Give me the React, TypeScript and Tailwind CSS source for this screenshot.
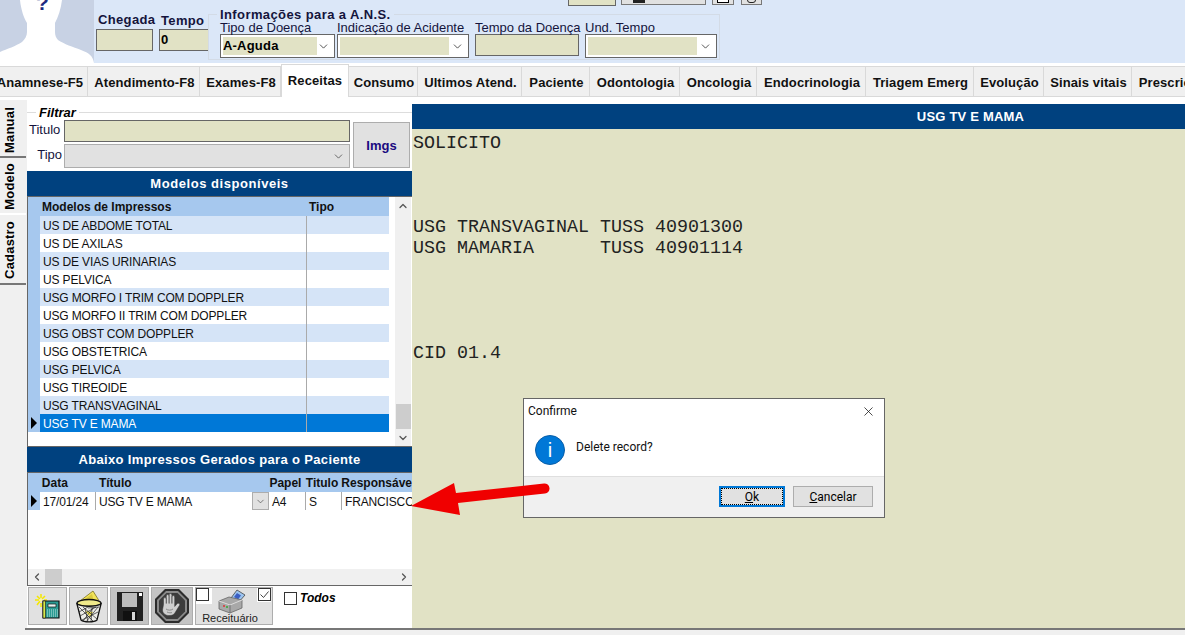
import { ChevronDown, ChevronLeft, ChevronRight, ChevronUp, X } from 'lucide-react';

const tabs = [
  { label: 'Anamnese-F5', w: 'w-[88px] pr-[7px]' },
  { label: 'Atendimento-F8', w: 'w-[112px] pl-[2px]' },
  { label: 'Exames-F8', w: 'w-[81px] pl-[2px]' },
  { label: 'Receitas', w: 'w-[68px]', active: true },
  { label: 'Consumo', w: 'w-[69px] pl-[2px]' },
  { label: 'Ultimos Atend.', w: 'w-[104px] pl-[2px]' },
  { label: 'Paciente', w: 'w-[68px] pl-[2px]' },
  { label: 'Odontologia', w: 'w-[90px] pl-[2px]' },
  { label: 'Oncologia', w: 'w-[77px] pl-[2px]' },
  { label: 'Endocrinologia', w: 'w-[109px] pl-[2px]' },
  { label: 'Triagem Emerg', w: 'w-[108px] pl-[2px]' },
  { label: 'Evolução', w: 'w-[70px] pl-[2px]' },
  { label: 'Sinais vitais', w: 'w-[88px] pl-[2px]' },
  { label: 'Prescrição', w: 'w-[80px] pl-[2px]' },
];

const modelos = [
  'US DE ABDOME TOTAL',
  'US DE AXILAS',
  'US DE VIAS URINARIAS',
  'US PELVICA',
  'USG MORFO I TRIM COM DOPPLER',
  'USG MORFO II TRIM COM DOPPLER',
  'USG OBST COM DOPPLER',
  'USG OBSTETRICA',
  'USG PELVICA',
  'USG TIREOIDE',
  'USG TRANSVAGINAL',
  'USG TV E MAMA',
];

const sideTabs = [
  { label: 'Manual', h: 'h-[55px]', dark: true },
  { label: 'Modelo', h: 'h-[55px]' },
  { label: 'Cadastro', h: 'h-[68px]', dark: true },
];

const laudo = `SOLICITO



USG TRANSVAGINAL TUSS 40901300
USG MAMARIA      TUSS 40901114




CID 01.4`;

function Combo({ value, w, fill }: { value?: string; w: string; fill: string }) {
  return (
    <div className={`${w} h-[24px] bg-white border border-[#666] flex items-center p-[2px]`}>
      <div className={`${fill} h-[18px] bg-[#e1e2c5] text-[13px] font-bold leading-[18px] tracking-[0.2px] text-black`}>{value}</div>
      <ChevronDown size={13} strokeWidth={1.4} className="ml-auto mr-[2px] text-[#222]" />
    </div>
  );
}

function RowMarker() {
  return <div className="w-0 h-0 border-y-[6px] border-y-transparent border-l-[6px] border-l-black ml-[3px]" />;
}

function NewIcon() {
  return (
    <svg width="26" height="26" viewBox="0 0 26 26">
      <path d="M6 1v4M6 10v4M0 7h4M9 7h3M2 3l3 3M10 3L7 6M2 12l3-4" stroke="#f5e800" strokeWidth="1.5" />
      <circle cx="6" cy="7" r="1.6" fill="#fff7a0" />
      <path d="M8 8h16v17H8z" fill="#2a9a92" stroke="#111" strokeWidth="1.2" />
      <path d="M8 8h2.500v17H8z" fill="#d7e84a" stroke="#111" strokeWidth="0.6" />
      <path d="M13 11h8v3h-8z" fill="#e8f5f3" stroke="#111" strokeWidth="0.7" />
      <path d="M12 17h11M12 19h11M12 21h11M12 23h11" stroke="#bfe3df" strokeWidth="1" strokeDasharray="1 1" />
    </svg>
  );
}

function TrashIcon() {
  return (
    <svg width="26" height="33" viewBox="0 0 26 33">
      <path d="M4 11L17 1l5 8 2 4-6 4H8z" fill="#f2e45a" stroke="#7a7020" strokeWidth="0.8" />
      <path d="M9 9l7-5 2 8z" fill="#d9c93e" />
      <ellipse cx="13" cy="13" rx="12" ry="3.500" fill="#efe98a" stroke="#111" strokeWidth="1.3" />
      <path d="M1 14l4 16c3 2.500 13 2.500 16 0l4-16c-5 3-19 3-24 0z" fill="#eeeeea" stroke="#111" strokeWidth="1.3" />
      <path d="M9 21l8 1-3 5z" fill="#f2e45a" />
      <path d="M3 17l14 14M7 17l14 12M12 18l11-1M17 18L7 31M22 17L10 32M3 22l9-5M4 26l16-9M6 30l16-8M9 18l3 14M16 18l-1 14" stroke="#222" strokeWidth="0.7" />
    </svg>
  );
}

function SaveIcon() {
  return (
    <svg width="28" height="31" viewBox="0 0 28 31">
      <path d="M1 1h26v29H1z" fill="#222" />
      <path d="M6 2h15v14H6z" fill="#bdbdbd" />
      <path d="M23 2h3v3h-3z" fill="#fff" />
      <path d="M7 20h14v10H7z" fill="#111" />
      <path d="M16 21h3v8h-3z" fill="#d8d8d8" />
    </svg>
  );
}

function StopIcon() {
  return (
    <svg width="34" height="34" viewBox="0 0 34 34">
      <path d="M10 0h14l10 10v14L24 34H10L0 24V10z" fill="#2c2c2c" />
      <path d="M11 2h12l9 9v12l-9 9H11l-9-9V11z" fill="#8a8a8a" />
      <path d="M11.500 4h11l7.500 7.500v11L22.500 30h-11L4 22.500v-11z" fill="#3c3c3c" />
      <path d="M8.500 15.500V10a1.400 1.400 0 012.800 0v4.500V7a1.400 1.400 0 012.800 0v7.500V6a1.400 1.400 0 012.800 0v8.500V8a1.400 1.400 0 012.800 0v9.500l2.600-3a1.500 1.500 0 012.300 1.800l-4.300 7c-1.200 2.200-3 3.200-5.300 3.200h-1.500c-3.300 0-6-2.500-6-5.500z" fill="#cfcfcf" stroke="#333" strokeWidth="0.5" />
      <path d="M11 20c2 1.500 5 1.500 7 0M12 23c2 1 4 1 5 .5" stroke="#777" strokeWidth="0.8" fill="none" />
    </svg>
  );
}

function PrinterIcon() {
  return (
    <svg width="28" height="25" viewBox="0 0 28 25">
      <path d="M13 9l6-8 8 5-7 8z" fill="#9cc4ef" stroke="#444" strokeWidth="0.8" />
      <path d="M16 8l3-4 4 2.500-3 4z" fill="#3b5fc4" />
      <path d="M1 12l10-4 13 3v8l-12 5-11-4z" fill="#a8a8a8" stroke="#666" strokeWidth="0.8" />
      <path d="M1 12l11 4 12-5" fill="none" stroke="#dcdcdc" strokeWidth="1" />
      <path d="M12 16v8" stroke="#666" strokeWidth="0.8" />
      <path d="M5 17h2" stroke="#d33" strokeWidth="1.500" />
      <path d="M8 18h2" stroke="#3a3" strokeWidth="1.500" />
    </svg>
  );
}

function TinyCheck({ checked }: { checked?: boolean }) {
  return (
    <div className="w-[13px] h-[13px] border border-[#333] bg-white flex items-center justify-center">
      {checked && (
        <svg width="11" height="11" viewBox="0 0 11 11">
          <path d="M1.500 5.500l3 3 5-6" fill="none" stroke="#444" strokeWidth="1" />
        </svg>
      )}
    </div>
  );
}

export default function App() {
  return (
    <div className="relative w-[1185px] h-[635px] overflow-hidden bg-white text-black font-['Liberation_Sans',Arial,sans-serif]">
      {/* Cabecalho */}
      <div className="h-[63px] bg-[#dbe7f8] flex relative">
        <div className="w-[94px] h-[63px] bg-[#c8d2e4] relative overflow-hidden">
          <svg width="94" height="63" viewBox="0 0 94 63" className="block">
            <path d="M20 0c1 10 4 18 7 23v9c0 4-2 7-5 10C16 46 7 49 0 52v11h94c-1-7-5-10-13-13-8-3-17-6-23-10-2-2-3-5-3-8v-9c3-6 6-14 7-23z" fill="#fff" />
          </svg>
          <span className="absolute left-[36px] top-[-9px] text-[21px] leading-[24px] font-bold text-[#1c2a80]">?</span>
        </div>

        <div className="ml-[2px] w-[57px] pt-[11px]">
          <div className="text-[13px] font-bold leading-[18px] tracking-[0.35px] text-[#14143c] whitespace-nowrap ml-[2px]">Chegada</div>
          <div className="h-[22px] bg-[#e1e2c5] border border-[#666]" />
        </div>
        <div className="ml-[6px] w-[50px] pt-[12px]">
          <div className="text-[13px] font-bold leading-[17px] tracking-[0.35px] text-[#14143c] ml-[2px]">Tempo</div>
          <div className="h-[22px] bg-[#e1e2c5] border border-[#666] text-[13px] font-bold leading-[20px] pl-[1px]">0</div>
        </div>

        <div className="relative -ml-[1px] mt-[14px] w-[512px] h-[46px] border border-[#d3dbe6] flex pl-[11px] pt-[6px]">
          <div className="absolute left-[8px] top-[-7px] bg-[#dbe7f8] px-[3px] text-[13px] font-bold leading-[14px] tracking-[0.4px] text-[#14143c] whitespace-nowrap">
            Informações para a A.N.S.
          </div>
          <div className="w-[117px]">
            <div className="text-[13px] leading-[13px] whitespace-nowrap text-[#14143c]">Tipo de Doença</div>
            <Combo value="A-Aguda" w="w-[115px]" fill="w-[94px]" />
          </div>
          <div className="w-[138px]">
            <div className="text-[13px] leading-[13px] whitespace-nowrap text-[#14143c]">Indicação de Acidente</div>
            <Combo w="w-[132px]" fill="w-[109px]" />
          </div>
          <div className="w-[110px]">
            <div className="text-[13px] leading-[13px] whitespace-nowrap text-[#14143c]">Tempo da Doença</div>
            <div className="w-[104px] h-[22px] bg-[#e1e2c5] border border-[#666]" />
          </div>
          <div className="w-[132px]">
            <div className="text-[13px] leading-[13px] whitespace-nowrap text-[#14143c]">Und. Tempo</div>
            <Combo w="w-[132px]" fill="w-[109px]" />
          </div>
        </div>

        {/* Resto da barra cortado no topo */}
        <div className="absolute left-[568px] top-[-4px] w-[48px] h-[10px] bg-[#e1e2c5] border border-[#666]" />
        <div className="absolute left-[621px] top-[-4px] w-[85px] h-[9px] bg-[#e1e1e1] border border-[#777] flex justify-start">
          <div className="ml-[11px] w-[12px] h-[6px] bg-[#222]" />
        </div>
        <div className="absolute left-[712px] top-[-4px] w-[22px] h-[9px] bg-[#e1e1e1] border border-[#777]">
          <div className="mx-auto w-[12px] h-[6px] border border-black bg-white" />
        </div>
        <div className="absolute left-[741px] top-[-4px] w-[21px] h-[9px] bg-[#e1e1e1] border border-[#777]">
          <div className="mx-auto w-[9px] h-[6px] rounded-full border border-[#222]" />
        </div>
      </div>

      {/* Abas */}
      <div className="h-[37px] pt-[3px]">
        <div className="flex w-full h-[31px] bg-[#f0f0f0] border-b border-t border-[#d9d9d9] overflow-visible">
          {tabs.map((tab) => (
            <div
              key={tab.label}
              className={`${tab.w} shrink-0 flex items-center justify-center whitespace-nowrap text-[13px] font-bold tracking-[0.1px] text-[#111] border-r border-[#d9d9d9] ${
                tab.active
                  ? 'bg-white h-[33px] -mt-[3px] pb-[1px] border-t border-l border-[#d9d9d9]'
                  : 'pt-[2px]'
              }`}
            >
              {tab.label}
            </div>
          ))}
        </div>
      </div>

      {/* Corpo */}
      <div className="flex h-[535px]">
        <div className="w-[27px] bg-[#f0f0f0] pt-[3px] shrink-0">
          {sideTabs.map((tab) => (
            <div
              key={tab.label}
              className={`${tab.h} w-[26px] mb-[2px] pr-[6px] flex items-center justify-center border-b-2 ${
                tab.dark ? 'border-b-[#777]' : 'border-b-white'
              }`}
            >
              <span className="[writing-mode:vertical-rl] rotate-180 text-[13px] font-bold tracking-[0.2px] whitespace-nowrap">{tab.label}</span>
            </div>
          ))}
        </div>

        <div className="w-[385px] shrink-0 flex flex-col pt-[4px]">
          {/* Filtro */}
          <div className="relative h-[67px] bg-white px-[2px]">
            <div className="absolute left-0 right-0 top-[8px] border-t border-[#ddd]" />
            <div className="absolute left-[9px] top-[1px] bg-white px-[3px] text-[13px] font-bold italic leading-[15px]">Filtrar</div>
            <div className="flex pt-[16px]">
              <div className="w-[35px] text-right text-[13px] leading-[16px] pt-[2px] text-[#14143c]">
                <div className="h-[25px] pr-[4px]">Titulo</div>
                <div className="h-[24px] pr-[2px]">Tipo</div>
              </div>
              <div className="w-[286px]">
                <div className="h-[22px] bg-[#e1e2c5] border border-[#666]" />
                <div className="mt-[2px] h-[24px] bg-[#e1e1e1] border border-[#adadad] flex items-center justify-end pr-[4px]">
                  <ChevronDown size={13} strokeWidth={1.4} className="text-[#444]" />
                </div>
              </div>
              <div className="ml-[3px] mt-[2px] w-[57px] h-[46px] pt-[2px] bg-[#e1e1e1] border border-[#adadad] flex items-center justify-center text-[13px] font-bold text-[#1a0a80]">
                Imgs
              </div>
            </div>
          </div>

          {/* Modelos */}
          <div className="h-[26px] bg-[#00417f] text-white text-center text-[13px] font-bold leading-[25px] tracking-[0.55px] border-b border-[#666]">
            Modelos disponíveis
          </div>
          <div className="h-[250px] flex bg-white border-b border-[#666] border-l border-l-[#666]">
            <div className="w-[361px]">
              <div className="h-[19px] bg-[#a6c8ee] flex text-[12px] font-bold leading-[20px] text-[#111]">
                <div className="w-[279px] pl-[14px]">Modelos de Impressos</div>
                <div className="pl-[2px]">Tipo</div>
              </div>
              {modelos.map((m, i) => {
                const selected = m === 'USG TV E MAMA';
                const bg = selected ? 'bg-[#0078d7] text-white' : i % 2 === 0 ? 'bg-[#d5e4f7] text-[#111]' : 'bg-white text-[#111]';
                return (
                  <div key={m} className="flex h-[18px] text-[12px] leading-[20px] tracking-[-0.15px]">
                    <div className="w-[12px] bg-[#a6c8ee] flex items-center shrink-0">{selected && <RowMarker />}</div>
                    <div className={`${bg} w-[267px] h-[18px] pl-[3px] border-r border-r-[#aaa] whitespace-nowrap`}>{m}</div>
                    <div className={`${bg} w-[82px]`} />
                  </div>
                );
              })}
            </div>
            <div className="ml-[6px] w-[16px] bg-[#f0f0f0] flex flex-col items-center text-[#555]">
              <ChevronUp size={12} strokeWidth={2.5} className="mt-[3px]" />
              <div className="mt-[192px] w-[15px] h-[25px] bg-[#cdcdcd]" />
              <ChevronDown size={12} strokeWidth={2.5} className="mt-[3px]" />
            </div>
          </div>

          {/* Impressos gerados */}
          <div className="h-[26px] bg-[#00417f] text-white text-center text-[13px] font-bold leading-[25px] tracking-[0.35px] border-b border-[#666]">
            Abaixo Impressos Gerados para o Paciente
          </div>
          <div className="h-[113px] bg-white border-b border-[#666] border-l border-l-[#666] flex flex-col overflow-hidden">
            <div className="h-[19px] bg-[#a6c8ee] flex text-[12px] font-bold leading-[20px] text-[#111] whitespace-nowrap">
              <div className="w-[14px]" />
              <div className="w-[58px]">Data</div>
              <div className="w-[173px]">Título</div>
              <div className="w-[37px]">Papel</div>
              <div className="w-[36px]">Titulo</div>
              <div>Responsáve</div>
            </div>
            <div className="flex h-[18px] text-[12px] leading-[20px] tracking-[-0.15px] text-[#111] whitespace-nowrap">
              <div className="w-[12px] bg-[#a6c8ee] flex items-center shrink-0"><RowMarker /></div>
              <div className="w-[56px] h-[18px] pl-[3px] border-r border-r-[#aaa] shrink-0">17/01/24</div>
              <div className="w-[156px] pl-[3px] shrink-0">USG TV E MAMA</div>
              <div className="w-[17px] h-[18px] bg-[#e1e1e1] border border-[#adadad] flex items-center justify-center shrink-0">
                <ChevronDown size={11} strokeWidth={1.4} className="text-[#444]" />
              </div>
              <div className="w-[37px] h-[18px] pl-[3px] border-r border-r-[#aaa] shrink-0">A4</div>
              <div className="w-[36px] h-[18px] pl-[3px] border-r border-r-[#aaa] shrink-0">S</div>
              <div className="pl-[3px]">FRANCISCO</div>
            </div>
            <div className="mt-auto h-[16px] bg-[#f0f0f0] flex items-center text-[#555]">
              <ChevronLeft size={12} strokeWidth={2.5} className="ml-[3px]" />
              <div className="ml-[2px] w-[17px] h-[16px] bg-[#cdcdcd]" />
              <ChevronRight size={12} strokeWidth={2.5} className="ml-auto mr-[2px]" />
            </div>
          </div>

          {/* Barra de botoes */}
          <div className="h-[42px] bg-white flex pt-[1px] pl-[1px] gap-[2px]">
            <div className="w-[39px] h-[38px] bg-[#e1e1e1] border border-[#adadad] flex items-center justify-center"><NewIcon /></div>
            <div className="w-[39px] h-[38px] bg-[#e1e1e1] border border-[#adadad] flex items-center justify-center"><TrashIcon /></div>
            <div className="w-[39px] h-[38px] bg-[#c4c4c4] border border-[#adadad] flex items-center justify-center"><SaveIcon /></div>
            <div className="w-[42px] h-[38px] bg-[#c4c4c4] border border-[#adadad] flex items-center justify-center"><StopIcon /></div>
            <div className="w-[78px] h-[38px] bg-[#e1e1e1] border border-[#adadad] relative flex flex-col items-center">
              <div className="mt-[1px] -ml-[5px]"><PrinterIcon /></div>
              <div className="text-[11px] leading-[12px] text-[#222] -mt-[2px] -ml-[8px]">Receituário</div>
              <div className="absolute left-0 top-0 bg-white pr-[3px] pb-[3px]"><TinyCheck /></div>
              <div className="absolute right-[1px] top-0 bg-white pl-[1px] pb-[1px]"><TinyCheck checked /></div>
            </div>
            <div className="ml-[9px] mt-[4px] flex h-[14px] items-center gap-[3px]">
              <TinyCheck />
              <span className="text-[12px] font-bold italic">Todos</span>
            </div>
          </div>
        </div>

        {/* Laudo */}
        <div className="flex-1 flex flex-col pt-[4px]">
          <div className="h-[25px] bg-[#00417f] text-white text-center text-[13px] font-bold leading-[25px] tracking-[0.2px] pl-[344px] shrink-0">
            USG TV E MAMA
          </div>
          <pre className="h-[499px] bg-[#e1e2c5] pl-[1px] pt-[4px] font-['Liberation_Mono','Courier_New',monospace] text-[18.33px] leading-[21px] text-[#222]">
            {laudo}
          </pre>
        </div>
      </div>

      {/* Linha inferior */}
      <div className="absolute left-[25px] right-0 top-[628px] h-[2px] bg-[#777]" />
      <div className="absolute left-0 right-0 top-[630px] h-[5px] bg-[#f0f0f0]" />

      {/* Dialogo */}
      <div className="absolute left-[523px] top-[398px] w-[362px] h-[120px] bg-white border border-[#666] flex flex-col font-['Roboto',sans-serif]">
        <div className="h-[24px] flex items-center pl-[4px] text-[12px] text-[#111]">
          Confirme
          <X size={15} strokeWidth={1.2} className="ml-auto mr-[8px]" />
        </div>
        <div className="h-[53px] flex pl-[11px] pt-[12px] gap-[11px]">
          <div className="w-[30px] h-[30px] rounded-full bg-[#0078d7] border border-[#0a5ea8] flex items-center justify-center text-white text-[20px] leading-none font-['Liberation_Sans',sans-serif]">
            i
          </div>
          <div className="text-[12px] leading-[20px] pt-[2px] text-[#111]">Delete record?</div>
        </div>
        <div className="flex-1 bg-[#f0f0f0] border-t border-[#dfdfdf] flex justify-end items-start pt-[9px] pr-[11px] gap-[8px] text-[12px]">
          <div className="w-[66px] h-[21px] bg-[#e1e1e1] border-2 border-[#0078d7] outline-1 outline-dotted -outline-offset-3 outline-black flex items-center justify-center">
            <span><u>O</u>k</span>
          </div>
          <div className="w-[80px] h-[21px] bg-[#e1e1e1] border border-[#adadad] flex items-center justify-center">
            <span><u>C</u>ancelar</span>
          </div>
        </div>
      </div>

      {/* Seta */}
      <svg className="absolute left-[405px] top-[478px]" width="150" height="42" viewBox="0 0 150 42">
        <path d="M6 28L49 5l2 10 88-9.500a5 5 0 011 10L53 25l2 12z" fill="#f00000" />
      </svg>
    </div>
  );
}
